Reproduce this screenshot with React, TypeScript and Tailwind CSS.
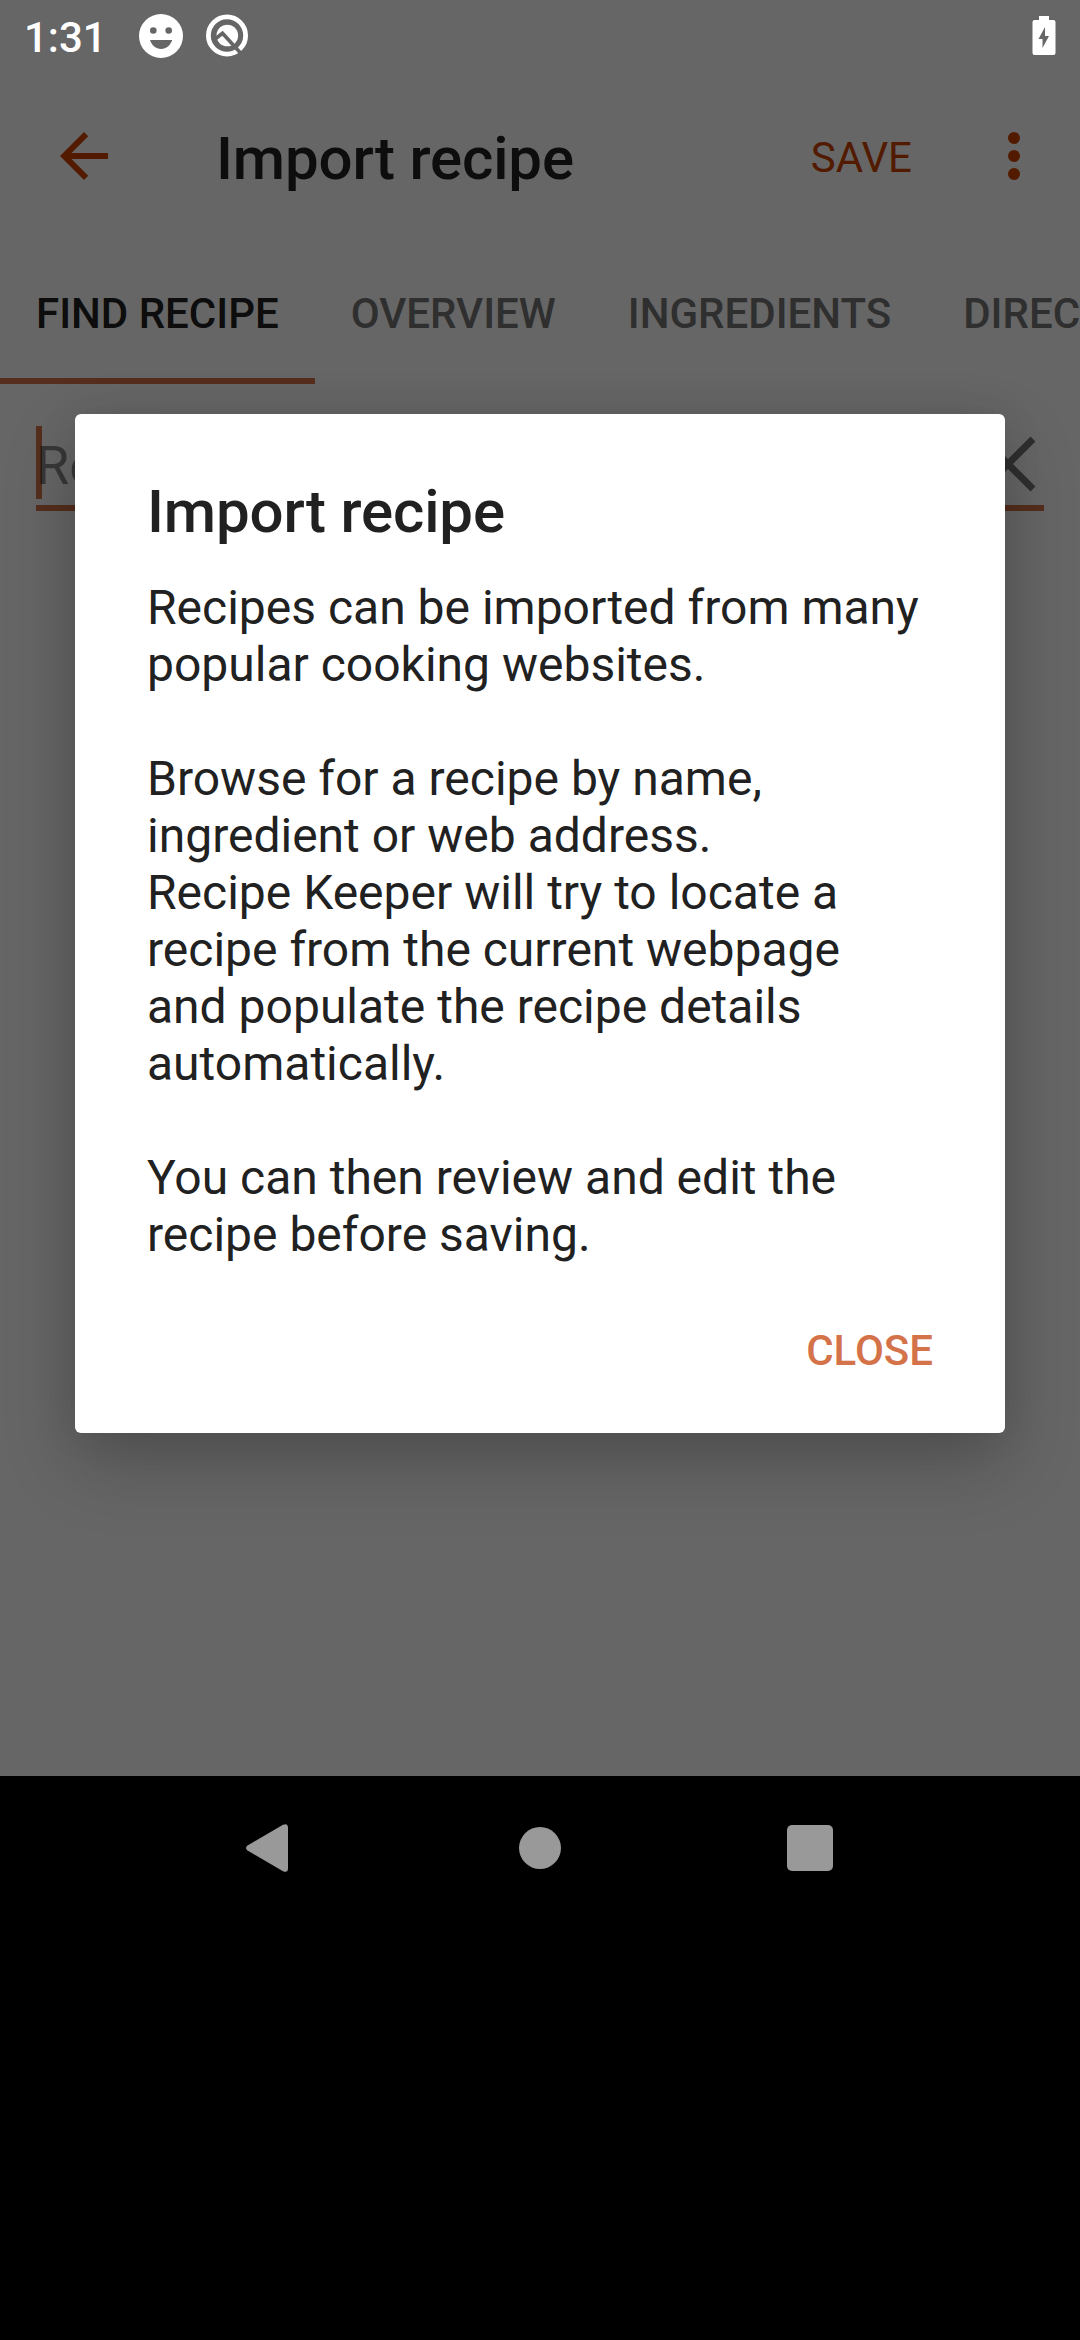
import React from "react";

const TABS = ["FIND RECIPE", "OVERVIEW", "INGREDIENTS", "DIRECTIONS"];

const MESSAGE = [
  "Recipes can be imported from many",
  "popular cooking websites.",
  "",
  "Browse for a recipe by name,",
  "ingredient or web address.",
  "Recipe Keeper will try to locate a",
  "recipe from the current webpage",
  "and populate the recipe details",
  "automatically.",
  "",
  "You can then review and edit the",
  "recipe before saving.",
];

function StatusBar() {
  return (
    <div className="relative z-10 flex h-[72px] items-start pl-6 pr-6 text-white">
      <span className="mt-[13px] w-[115px] text-[42px] font-medium leading-[49px]">1:31</span>
      <svg className="mt-[14px] h-11 w-11" viewBox="0 0 44 44">
        <path
          fill="currentColor"
          fillRule="evenodd"
          d="M22 0a22 22 0 1 0 0 44a22 22 0 1 0 0-44zM14.300 13.200a3.300 3.300 0 1 1 0 6.600a3.300 3.300 0 1 1 0-6.600zM29.700 13.200a3.300 3.300 0 1 1 0 6.600a3.300 3.300 0 1 1 0-6.600zM11 26h22.200c-1.600 5.200-6 9-11.100 9s-9.500-3.800-11.100-9z"
        />
      </svg>
      <svg className="ml-[22px] mt-[14px] h-11 w-11" viewBox="0 0 44 44" fill="none">
        <circle cx="22" cy="21.500" r="18.600" stroke="currentColor" strokeWidth="4.800" />
        <circle cx="22.300" cy="21.500" r="10.800" fill="currentColor" />
        <path d="M9.500 25.500L17.500 19.300L36 39.500" stroke="#666666" strokeWidth="3.600" />
      </svg>
      <svg className="ml-auto mt-4 h-[39px] w-6" viewBox="0 0 24 39">
        <path
          fill="currentColor"
          fillRule="evenodd"
          d="M7 0h10v4h4.500a2 2 0 0 1 2 2v31a2 2 0 0 1-2 2h-19a2 2 0 0 1-2-2V6a2 2 0 0 1 2-2H7zM13 11L6.500 23h4v9l6.500-12h-4z"
        />
      </svg>
    </div>
  );
}

function Toolbar() {
  return (
    <header className="flex h-[168px] items-center pl-12 pr-[30px] text-[#cc4400]">
      <svg className="h-[72px] w-[72px]" viewBox="0 0 24 24" fill="currentColor">
        <path d="M20 11H7.830l5.590-5.590L12 4l-8 8 8 8 1.410-1.410L7.830 13H20v-2z" />
      </svg>
      <h1 className="ml-24 mt-[5px] text-[60px] font-medium leading-[71px] tracking-[-0.15px] text-[#212121]">
        Import recipe
      </h1>
      <span className="ml-auto mt-[3px] text-[42px] leading-[49px]">SAVE</span>
      <svg className="ml-[66px] h-[72px] w-[72px]" viewBox="0 0 24 24" fill="currentColor">
        <circle cx="12" cy="6" r="2" />
        <circle cx="12" cy="12" r="2" />
        <circle cx="12" cy="18" r="2" />
      </svg>
    </header>
  );
}

function Tabs() {
  return (
    <nav className="flex h-36 overflow-hidden">
      {TABS.map((label, i) => (
        <div
          key={label}
          className={
            i === 0
              ? "flex shrink-0 items-center border-b-[6px] border-[#d4734a] px-9 pt-[9px] text-[#212121]"
              : "flex shrink-0 items-center border-b-[6px] border-transparent px-9 pt-[9px] text-[#757575]"
          }
        >
          <span className="whitespace-nowrap text-[42px] font-medium leading-[49px]">{label}</span>
        </div>
      ))}
    </nav>
  );
}

function SearchField() {
  return (
    <div className="mx-9 mt-[42px] flex h-[85px] items-start border-b-[6px] border-[#d4734a]">
      <div className="h-[73px] w-[6px] bg-[#d4734a]" />
      <span className="relative -ml-[6px] mt-[8px] text-[54px] leading-[63px] text-black/45">Recipe</span>
      <svg className="ml-auto mt-2 h-[60px] w-[66px]" viewBox="0 0 66 60">
        <path d="M5 5l50 50M55 5L5 55" stroke="#757575" strokeWidth="7" />
      </svg>
    </div>
  );
}

function ImportDialog() {
  return (
    <div className="absolute inset-0 flex items-start justify-center bg-black/60 pt-[414px]">
      <div
        role="dialog"
        className="flex h-[1019px] w-[930px] flex-col rounded-md bg-white px-[72px] pt-[62px] text-[#212121] shadow-[0_30px_72px_rgba(0,0,0,0.22),0_0_40px_rgba(0,0,0,0.08)]"
      >
        <h2 className="text-[60px] font-medium leading-[71px] tracking-[-0.15px]">Import recipe</h2>
        <div className="mt-8 text-[48px] leading-[57px]">
          {MESSAGE.map((line, i) => (
            <p key={i} className="h-[57px] whitespace-nowrap">
              {line}
            </p>
          ))}
        </div>
        <button className="mt-[63px] self-end text-[42px] font-medium leading-[49px] text-[#d4734a]">CLOSE</button>
      </div>
    </div>
  );
}

function NavigationBar() {
  return (
    <div className="flex h-36 items-center bg-black pl-[246px] text-[#999999]">
      <svg className="h-12 w-[42px]" viewBox="0 0 42 48">
        <path
          d="M1.500 21.500L37 .7q5-2 5 3v40.600q0 5-5 3L1.500 26.500q-3-2.500 0-5z"
          fill="currentColor"
        />
      </svg>
      <div className="ml-[231px] h-[42px] w-[42px] rounded-full bg-[#999999]" />
      <div className="ml-[226px] h-[46px] w-[46px] rounded-[5px] bg-[#999999]" />
    </div>
  );
}

export default function App() {
  return (
    <div className="h-[2340px] w-[1080px] overflow-hidden bg-black font-['Roboto',sans-serif]">
      <main className="relative h-[1776px] overflow-hidden bg-white">
        <StatusBar />
        <Toolbar />
        <Tabs />
        <SearchField />
        <ImportDialog />
      </main>
      <NavigationBar />
    </div>
  );
}
